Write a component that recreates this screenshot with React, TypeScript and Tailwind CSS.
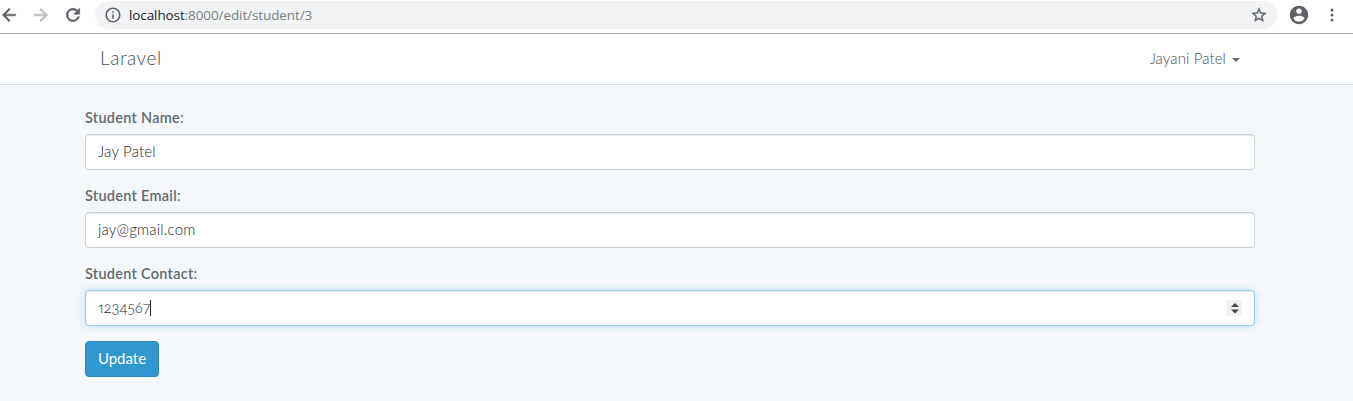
import { useState } from 'react';
import type { ReactNode } from 'react';

function Icon({ d, className }: { d: string; className: string }) {
  return (
    <svg viewBox="0 0 24 24" fill="currentColor" stroke="currentColor" className={`shrink-0 ${className}`}>
      <path d={d} />
    </svg>
  );
}

function Toolbar() {
  return (
    <div className="flex h-[34px] items-start border-b border-[#b3b4b6] bg-white text-[#5f6368]">
      <div className="flex h-[30px] w-[95px] shrink-0 items-center">
        <Icon className="-ml-[1px] size-5 stroke-[0.7]" d="M20 11H7.83l5.59-5.59L12 4l-8 8 8 8 1.41-1.41L7.83 13H20v-2z" />
        <Icon className="ml-3 size-5 stroke-[0.7] text-[#babcbe]" d="M12 4l-1.41 1.41L16.17 11H4v2h12.17l-5.58 5.59L12 20l8-8z" />
        <Icon className="ml-3 size-5 stroke-[0.8]" d="M17.65 6.35A7.96 7.96 0 0 0 12 4a8 8 0 1 0 7.73 10h-2.08A6 6 0 1 1 12 6c1.66 0 3.14.69 4.22 1.78L13 11h7V4l-2.35 2.35z" />
      </div>
      <div className="mt-px flex h-7 w-[1182px] shrink-0 items-center rounded-full bg-[#f1f3f4] pr-[9px] pl-[9px]">
        <Icon className="size-[18px] stroke-0" d="M11 17h2v-6h-2v6zm1-15C6.48 2 2 6.48 2 12s4.48 10 10 10 10-4.48 10-10S17.52 2 12 2zm0 18c-4.41 0-8-3.59-8-8s3.59-8 8-8 8 3.59 8 8-3.59 8-8 8zM11 9h2V7h-2v2z" />
        <span className="ml-[7px] font-['Open_Sans','Noto_Sans',sans-serif] text-[13.5px] leading-5 tracking-[-0.1px] text-[#7b7f83]">
          <span className="text-[#202124]">localhost</span>:8000/edit/student/3
        </span>
        <Icon className="ml-auto size-[18px] stroke-[0.4]" d="M22 9.24l-7.19-.62L12 2 9.19 8.63 2 9.24l5.46 4.73L5.82 21 12 17.27 18.18 21l-1.63-7.03L22 9.24zM12 15.4l-3.76 2.27 1-4.28-3.32-2.88 4.38-.38L12 6.1l1.71 4.04 4.38.38-3.32 2.88 1 4.28L12 15.4z" />
      </div>
      <div className="flex h-[30px] items-center">
        <Icon className="ml-[11px] size-[22px] stroke-0" d="M12 2C6.48 2 2 6.48 2 12s4.48 10 10 10 10-4.48 10-10S17.52 2 12 2zm0 3c1.66 0 3 1.34 3 3s-1.34 3-3 3-3-1.34-3-3 1.34-3 3-3zm0 14.2a7.2 7.2 0 0 1-6-3.22c.03-1.99 4-3.08 6-3.08 1.99 0 5.97 1.09 6 3.08a7.2 7.2 0 0 1-6 3.22z" />
        <Icon className="ml-3 size-5 stroke-0" d="M12 7.8a1.8 1.8 0 1 0 0-3.6 1.8 1.8 0 0 0 0 3.6zm0 2.4a1.8 1.8 0 1 0 0 3.6 1.8 1.8 0 0 0 0-3.6zm0 6a1.8 1.8 0 1 0 0 3.6 1.8 1.8 0 0 0 0-3.6z" />
      </div>
    </div>
  );
}

function Field({ label, children }: { label: string; children: ReactNode }) {
  return (
    <div className="mb-[15px] h-[63px]">
      <label className="mb-[5px] block h-[22px] text-[14.5px] leading-[22px] font-normal tracking-[0.27px] text-[#636b6f]">
        <span className="font-semibold">{label}</span>:
      </label>
      {children}
    </div>
  );
}

const inputClass =
  'flex h-9 w-full items-center rounded-[4px] border bg-white px-3 text-[15px] font-light text-[#24282a]';

export default function App() {
  const [contact] = useState('1234567');
  return (
    <div className="h-[401px] overflow-hidden bg-[#f5f8fa] font-['Lato',sans-serif]">
      <Toolbar />
      <nav className="flex h-[51px] items-center justify-between border-b border-[#d3e0e9] bg-white pr-[113px] pl-[100px] font-light text-[#485054]">
        <a className="pb-[3px] text-[19px] leading-6 tracking-[0.55px]">Laravel</a>
        <a className="flex items-center text-[15px] leading-6 tracking-[0.1px]">
          <span className="pb-0.5">Jayani Patel</span>
          <svg viewBox="0 0 8 4" className="mt-px ml-1.5 h-1 w-2 fill-[#636b6f]"><path d="M0 0h8L4 4z" /></svg>
        </a>
      </nav>
      <main className="mx-[85px] w-[1170px] pt-[22px]">
        <Field label="Student Name">
          <div className={`${inputClass} border-[#ccd0d2] shadow-[inset_0_1px_1px_rgba(0,0,0,0.075)]`}>
            <span className="pb-0.5 tracking-[0.2px]">Jay Patel</span>
          </div>
        </Field>
        <Field label="Student Email">
          <div className={`${inputClass} border-[#ccd0d2] shadow-[inset_0_1px_1px_rgba(0,0,0,0.075)]`}>
            <span className="pb-0.5 tracking-[0.2px]">jay@gmail.com</span>
          </div>
        </Field>
        <Field label="Student Contact">
          <div className={`${inputClass} border-[#98cbe8] shadow-[inset_0_1px_1px_rgba(0,0,0,0.075),0_0_8px_rgba(152,203,232,0.6)]`}>
            <span className="pb-0.5 tracking-[-0.1px] [font-feature-settings:'onum','pnum']">{contact}</span>
            <span className="h-4 w-px bg-[#222]" />
            <span className="ml-auto flex h-4 w-[15px] items-center justify-center bg-[#f0f0f0]">
              <svg viewBox="0 0 8 12" className="h-3 w-2 fill-[#444]"><path d="M4 1L8 5H0zM0 7.5h8L4 11.5z" /></svg>
            </span>
          </div>
        </Field>
        <button className="flex h-9 w-[74px] items-center justify-center rounded-[4px] border border-[#2a88bd] bg-[#3097d1] pb-0.5 text-[15px] text-white">
          Update
        </button>
      </main>
    </div>
  );
}
